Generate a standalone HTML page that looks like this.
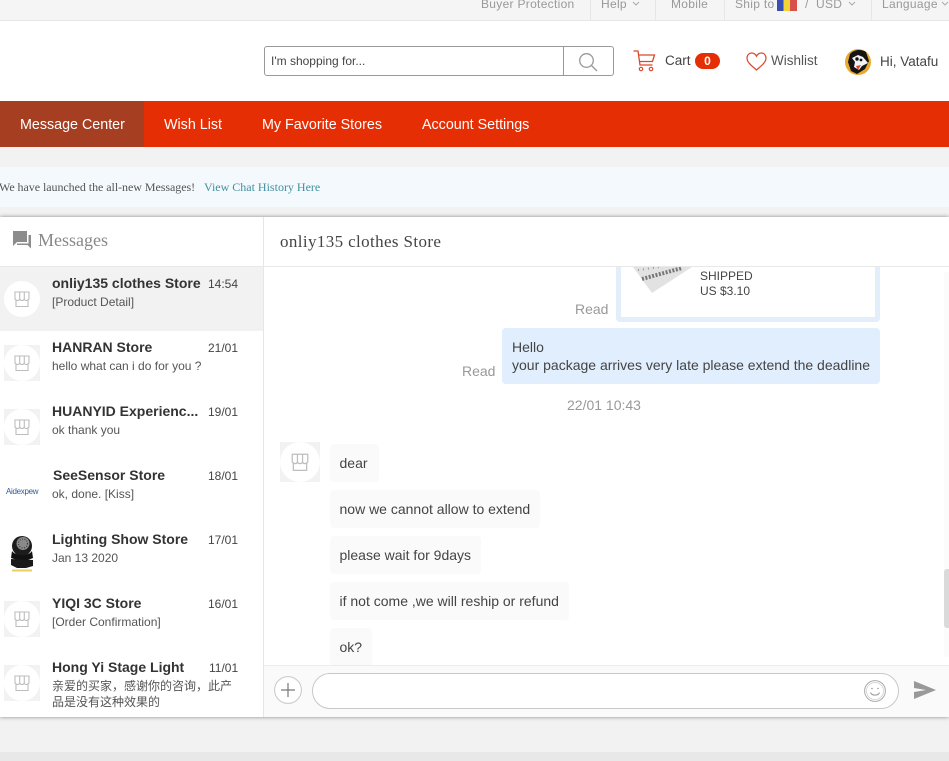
<!DOCTYPE html>
<html><head><meta charset="utf-8">
<style>
*{box-sizing:border-box}
html,body{margin:0;padding:0;width:949px;height:761px;overflow:hidden;background:#f2f2f2;font-family:"Liberation Sans","Noto Sans CJK SC",sans-serif}
.a{position:absolute;white-space:nowrap}
.top{color:#999;font-size:12px;line-height:14px;top:-3px;letter-spacing:.3px}
.vd{position:absolute;top:0;width:1px;height:20px;background:#e6e6e6}
.nav{color:#fff;font-size:14.3px;line-height:20px;top:115px}
.name{left:52px;font-weight:bold;font-size:14px;line-height:18px;color:#333}
.time{font-size:12px;line-height:16px;color:#444;left:208px}
.pre{left:52px;font-size:12px;line-height:16px;color:#555}
.av{position:absolute;left:4px;width:36px;height:36px}
.b{position:absolute;left:330px;height:38px;background:#fafafa;border-radius:4px;font-size:14px;line-height:38px;color:#444;padding-left:9.5px}
</style></head><body>
<svg width="0" height="0" style="position:absolute"><defs>
<symbol id="st" viewBox="0 0 36 36"><rect width="36" height="36" fill="#f2f2f2"/><circle cx="18" cy="18" r="18" fill="#fff"/><path d="M11 11H25V18C23.500 20 21 20 20.300 18C19.500 20 16.500 20 15.700 18C15 20 12.500 20 11 18ZM15.700 11V18M20.300 11V18M12 19.500V25.500H24V19.500" fill="none" stroke="#bdbdbd" stroke-width="1.100"/></symbol>
</defs></svg>

<!-- top bar -->
<div class="a" style="left:0;top:0;width:949px;height:21px;background:#f5f5f5;border-bottom:1px solid #e6e6e6"></div>
<div class="a top" style="left:481px">Buyer Protection</div>
<div class="vd" style="left:590px"></div>
<div class="a top" style="left:601px">Help</div>
<svg class="a" style="left:632px;top:1px" width="8" height="6"><path d="M1 1L4 4L7 1" fill="none" stroke="#aaa"/></svg>
<div class="vd" style="left:655px"></div>
<div class="a top" style="left:671px">Mobile</div>
<div class="vd" style="left:724px"></div>
<div class="a top" style="left:735px">Ship to</div>
<div class="a" style="left:777px;top:0;width:20px;height:11px;background:linear-gradient(90deg,#3a4fb5 0 33%,#f4d33a 33% 66%,#d9504a 66%)"></div>
<div class="a top" style="left:805px">/</div>
<div class="a top" style="left:816px">USD</div>
<svg class="a" style="left:848px;top:1px" width="8" height="6"><path d="M1 1L4 4L7 1" fill="none" stroke="#aaa"/></svg>
<div class="vd" style="left:871px"></div>
<div class="a top" style="left:882px">Language</div>
<svg class="a" style="left:941px;top:1px" width="8" height="6"><path d="M1 1L4 4L7 1" fill="none" stroke="#aaa"/></svg>

<!-- header -->
<div class="a" style="left:0;top:21px;width:949px;height:80px;background:#fff"></div>
<div class="a" style="left:264px;top:46px;width:350px;height:30px;border:1px solid #999;border-radius:3px;background:#fff"></div>
<div class="a" style="left:563px;top:46px;width:1px;height:30px;background:#999"></div>
<div class="a" style="left:271px;top:53px;font-size:12px;line-height:16px;color:#444">I'm shopping for...</div>
<svg class="a" style="left:577px;top:51px" width="22" height="22" viewBox="0 0 22 22"><circle cx="9.500" cy="9.500" r="6.800" fill="none" stroke="#999" stroke-width="1.300"/><path d="M14.500 14.500L20 20" stroke="#999" stroke-width="1.300"/></svg>
<svg class="a" style="left:632px;top:49px" width="24" height="24" viewBox="0 0 24 24"><path d="M1.500 2H6L8 16H20.500M6.600 6H22.500L20.500 12.500H7.500" fill="none" stroke="#d9492c" stroke-width="1.300"/><circle cx="9" cy="20" r="1.700" fill="none" stroke="#d9492c" stroke-width="1.200"/><circle cx="19" cy="20" r="1.700" fill="none" stroke="#d9492c" stroke-width="1.200"/></svg>
<div class="a" style="left:665px;top:52px;font-size:13.500px;line-height:17px;color:#444">Cart</div>
<div class="a" style="left:695px;top:53px;width:25px;height:16px;border-radius:8px;background:#e62e04;color:#fff;font-size:12px;font-weight:bold;line-height:16px;text-align:center">0</div>
<svg class="a" style="left:746px;top:52px" width="21" height="19" viewBox="0 0 21 19"><path d="M10.500 18C6 14 1 10.500 1 6C1 3 3.200 1 5.600 1C7.800 1 9.500 2.200 10.500 4.200C11.500 2.200 13.200 1 15.400 1C17.800 1 20 3 20 6C20 10.500 15 14 10.500 18Z" fill="none" stroke="#d9492c" stroke-width="1.200"/></svg>
<div class="a" style="left:771px;top:52px;font-size:13.500px;line-height:17px;color:#555">Wishlist</div>
<svg class="a" style="left:845px;top:49px" width="26" height="26" viewBox="0 0 26 26"><circle cx="13" cy="13" r="13" fill="#e8a92e"/><path d="M5 5C9 0 17 0 21 3L24 12L20 20L12 25L6 22L3 13Z" fill="#151515"/><path d="M7 9L13 6L18 8L23 14L17 17L14 21L9 18L10 13Z" fill="#f4f4f4"/><circle cx="12" cy="10" r="1.700" fill="#111"/><circle cx="16" cy="11" r="1.400" fill="#111"/><path d="M11 17L16 16L13 21Z" fill="#d9492c"/></svg>
<div class="a" style="left:880px;top:53px;font-size:13.500px;line-height:17px;color:#444">Hi, Vatafu</div>

<!-- nav -->
<div class="a" style="left:0;top:101px;width:949px;height:46px;background:#e62e04"></div>
<div class="a" style="left:0;top:101px;width:144px;height:46px;background:#a63e22"></div>
<div class="a nav" style="left:20px">Message Center</div>
<div class="a nav" style="left:164px">Wish List</div>
<div class="a nav" style="left:262px">My Favorite Stores</div>
<div class="a nav" style="left:422px">Account Settings</div>

<!-- notice -->
<div class="a" style="left:0;top:167px;width:949px;height:40px;background:#f3f9fd"></div>
<div class="a" style="left:-1px;top:179px;font-family:'Liberation Serif',serif;font-size:12px;line-height:16px;color:#555;letter-spacing:-.05px">We have launched the all-new Messages!</div>
<div class="a" style="left:204px;top:179px;font-family:'Liberation Serif',serif;font-size:12px;line-height:16px;color:#43909f">View Chat History Here</div>

<!-- panel -->
<div class="a" style="left:0;top:217px;width:949px;height:500px;background:#fff;box-shadow:0 0 4px rgba(0,0,0,.45)"></div>
<div class="a" style="left:263px;top:217px;width:1px;height:500px;background:#e6e6e6"></div>
<div class="a" style="left:0;top:266px;width:949px;height:1px;background:#e8e8e8"></div>
<svg class="a" style="left:13px;top:231px" width="18" height="18" viewBox="0 0 18 18"><path d="M0 0H14V11H4L0 15ZM15.500 4H18V17.500L14.500 14H4V12.500H15.500Z" fill="#8c8c8c"/></svg>
<div class="a" style="left:38px;top:230px;font-family:'Liberation Serif',serif;font-size:18px;line-height:21px;color:#888">Messages</div>
<div class="a" style="left:280px;top:232px;font-family:'Liberation Serif',serif;font-size:17px;line-height:20px;color:#444;letter-spacing:.38px">onliy135 clothes Store</div>

<!-- list -->
<div class="a" style="left:0;top:267px;width:263px;height:64px;background:#f2f2f2"></div>
<svg class="av" style="top:281px"><use href="#st"/></svg>
<div class="a name" style="top:274px">onliy135 clothes Store</div><div class="a time" style="top:276px">14:54</div><div class="a pre" style="top:294px">[Product Detail]</div>
<svg class="av" style="top:345px"><use href="#st"/></svg>
<div class="a name" style="top:338px">HANRAN Store</div><div class="a time" style="top:340px">21/01</div><div class="a pre" style="top:358px">hello what can i do for you ?</div>
<svg class="av" style="top:409px"><use href="#st"/></svg>
<div class="a name" style="top:402px">HUANYID Experienc...</div><div class="a time" style="top:404px">19/01</div><div class="a pre" style="top:422px">ok thank you</div>
<div class="a" style="left:6px;top:487px;font-size:8px;line-height:10px;color:#2c5c9e;letter-spacing:-.3px">Aidexpew</div>
<div class="a name" style="top:466px;left:53px">SeeSensor Store</div><div class="a time" style="top:468px">18/01</div><div class="a pre" style="top:486px">ok, done. [Kiss]</div>
<svg class="a" style="left:8px;top:535px" width="28" height="38" viewBox="0 0 28 38"><circle cx="14" cy="11" r="10" fill="#1c1c1c"/><circle cx="15" cy="8.500" r="6.500" fill="#8a8a8a"/><circle cx="15" cy="8.500" r="4.500" fill="none" stroke="#333" stroke-dasharray="1 1.500"/><path d="M4 16C7 21 20 22 24 16L25 23L20 25H9L3 23Z" fill="#111"/><path d="M3 24L25 25V31L18 33H9L3 30Z" fill="#1a1a1a"/><rect x="4" y="34.500" width="20" height="2" fill="#e8cf62"/></svg>
<div class="a name" style="top:530px">Lighting Show Store</div><div class="a time" style="top:532px">17/01</div><div class="a pre" style="top:550px">Jan 13 2020</div>
<svg class="av" style="top:601px"><use href="#st"/></svg>
<div class="a name" style="top:594px">YIQI 3C Store</div><div class="a time" style="top:596px">16/01</div><div class="a pre" style="top:614px">[Order Confirmation]</div>
<svg class="av" style="top:665px"><use href="#st"/></svg>
<div class="a name" style="top:658px">Hong Yi Stage Light</div><div class="a time" style="top:660px;left:209px">11/01</div>
<div class="a pre" style="top:678px">亲爱的买家，感谢你的咨询，此产</div><div class="a pre" style="top:694px">品是没有这种效果的</div>

<!-- chat -->
<div class="a" style="left:616px;top:267px;width:264px;height:55px;border:solid #e3eefb;border-width:0 5px 5px 5px;border-radius:0 0 4px 4px"></div>
<svg class="a" style="left:630px;top:267px" width="64" height="28" viewBox="0 0 64 28"><path d="M3 0H62L22 26Z" fill="#e2e2e2"/><path d="M12 12L52 1" stroke="#777" stroke-width="4" stroke-dasharray="2 1.500"/><path d="M8 3L30 0" stroke="#999" stroke-width="2" stroke-dasharray="1 4"/></svg>
<div class="a" style="left:700px;top:268px;font-size:12px;line-height:16px;color:#444">SHIPPED</div>
<div class="a" style="left:700px;top:283px;font-size:12px;line-height:16px;color:#444">US $3.10</div>
<div class="a" style="left:575px;top:301px;font-size:14px;line-height:16px;color:#999">Read</div>
<div class="a" style="left:502px;top:328px;width:378px;height:56px;background:#e0eefd;border-radius:4px"></div>
<div class="a" style="left:512px;top:338px;font-size:14px;line-height:18px;color:#444">Hello<br>your package arrives very late please extend the deadline</div>
<div class="a" style="left:462px;top:363px;font-size:14px;line-height:16px;color:#999">Read</div>
<div class="a" style="left:567px;top:397px;font-size:14px;line-height:16px;color:#999">22/01 10:43</div>
<svg class="a" style="left:280px;top:442px" width="40" height="40"><use href="#st"/></svg>
<div class="a b" style="top:444px;width:49px">dear</div>
<div class="a b" style="top:490px;width:210px">now we cannot allow to extend</div>
<div class="a b" style="top:536px;width:151px">please wait for 9days</div>
<div class="a b" style="top:582px;width:239px">if not come ,we will reship or refund</div>
<div class="a b" style="top:628px;width:42px">ok?</div>
<div class="a" style="left:944px;top:272px;width:5px;height:385px;background:#fbfbfb;border-radius:3px 0 0 3px"></div>
<div class="a" style="left:944px;top:569px;width:5px;height:59px;background:#dadada;border-radius:3px 0 0 3px"></div>

<!-- input -->
<div class="a" style="left:264px;top:665px;width:685px;height:52px;background:#fafafa;border-top:1px solid #ececec"></div>
<svg class="a" style="left:274px;top:676px" width="28" height="28" viewBox="0 0 28 28"><circle cx="14" cy="14" r="13.400" fill="#fff" stroke="#c8c8c8"/><path d="M14 7V21M7 14H21" stroke="#777" stroke-width="1.200"/></svg>
<div class="a" style="left:312px;top:673px;width:587px;height:36px;background:#fff;border:1px solid #c8c8c8;border-radius:18px"></div>
<svg class="a" style="left:864px;top:680px" width="22" height="22" viewBox="0 0 22 22"><circle cx="11" cy="11" r="10.400" fill="none" stroke="#aaa"/><circle cx="11" cy="11" r="8.500" fill="none" stroke="#ccc" stroke-width=".7"/><circle cx="8" cy="8.500" r=".8" fill="#999"/><circle cx="14" cy="8.500" r=".8" fill="#999"/><path d="M6.500 12.500C8 16 14 16 15.500 12.500" fill="none" stroke="#999"/></svg>
<svg class="a" style="left:914px;top:681px" width="22" height="18" viewBox="0 0 22 18"><path d="M0 0L22 9L0 18V11L12 9L0 7Z" fill="#999"/></svg>

<div class="a" style="left:0;top:752px;width:949px;height:9px;background:#e8e8e8"></div>
</body></html>
